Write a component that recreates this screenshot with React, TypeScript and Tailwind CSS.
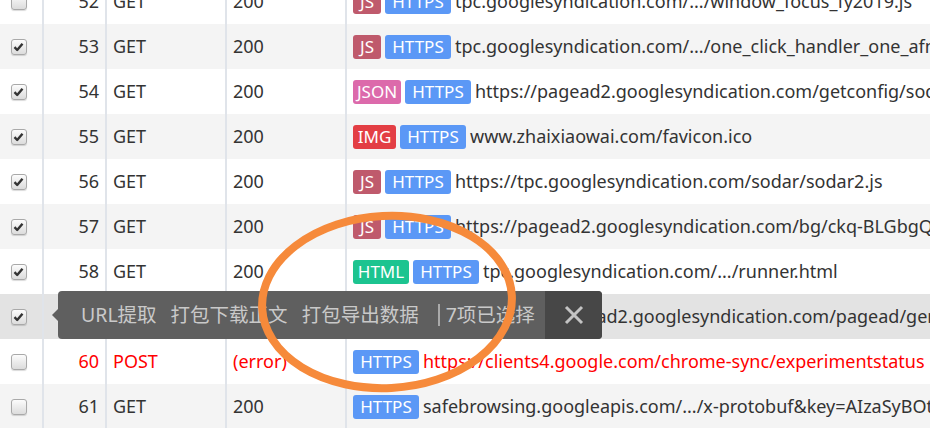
import React from 'react'

type Tag = 'JS' | 'JSON' | 'IMG' | 'HTML' | 'OTHER'

type Row = {
  id: number
  method: string
  status: string
  tag?: Tag
  url: string
  checked: boolean
  error?: boolean
}

const rows: Row[] = [
  { id: 52, method: 'GET', status: '200', tag: 'JS', url: 'tpc.googlesyndication.com/.../window_focus_fy2019.js', checked: false },
  { id: 53, method: 'GET', status: '200', tag: 'JS', url: 'tpc.googlesyndication.com/.../one_click_handler_one_afma_fy2019.js', checked: true },
  { id: 54, method: 'GET', status: '200', tag: 'JSON', url: 'https://pagead2.googlesyndication.com/getconfig/sodar', checked: true },
  { id: 55, method: 'GET', status: '200', tag: 'IMG', url: 'www.zhaixiaowai.com/favicon.ico', checked: true },
  { id: 56, method: 'GET', status: '200', tag: 'JS', url: 'https://tpc.googlesyndication.com/sodar/sodar2.js', checked: true },
  { id: 57, method: 'GET', status: '200', tag: 'JS', url: 'https://pagead2.googlesyndication.com/bg/ckq-BLGbgQ.js', checked: true },
  { id: 58, method: 'GET', status: '200', tag: 'HTML', url: 'tpc.googlesyndication.com/.../runner.html', checked: true },
  { id: 59, method: 'GET', status: '200', tag: 'OTHER', url: 'https://pagead2.googlesyndication.com/pagead/gen_204', checked: true },
  { id: 60, method: 'POST', status: '(error)', url: 'https://clients4.google.com/chrome-sync/experimentstatus', checked: false, error: true },
  { id: 61, method: 'GET', status: '200', url: 'safebrowsing.googleapis.com/.../x-protobuf&key=AIzaSyBOti4mM', checked: false },
]

// badge colour + fixed width, measured off the screenshot
const tagClass: Record<Tag, string> = {
  JS: 'w-[28px] bg-[#bf5a6c]',
  JSON: 'w-[48px] bg-[#dc6aab]',
  IMG: 'w-[43px] bg-[#e33e44]',
  HTML: 'w-[56px] bg-[#1cc490]',
  OTHER: 'w-[65px] bg-[#9a9a9a]',
}

function Badge({ label, className }: { label: string; className: string }) {
  return (
    <span className={`inline-flex h-[24px] shrink-0 items-center justify-center rounded-[3px] text-[17px] leading-none text-white ${className}`}>
      {label}
    </span>
  )
}

function Checkbox({ checked }: { checked: boolean }) {
  return (
    <span className="flex h-[16px] w-[16px] items-center justify-center rounded-[3px] border border-[#a9a9a9] bg-gradient-to-b from-[#fcfcfc] to-[#dcdcdc] shadow-[0_1px_1px_rgba(0,0,0,0.15)]">
      {checked && (
        <svg width="11" height="10" viewBox="0 0 11 10">
          <path d="M1.5 5.2 L4.2 8 L9.5 1.8" fill="none" stroke="#333" strokeWidth="2.4" strokeLinejoin="round" />
        </svg>
      )}
    </span>
  )
}

function TableRow({ row, index }: { row: Row; index: number }) {
  const bg = row.id === 59 ? 'bg-[#e3e3e3]' : index % 2 === 1 ? 'bg-[#f4f4f4]' : 'bg-white'
  const tone = row.error ? 'text-[#ff0000]' : 'text-[#333]'
  return (
    <div className={`flex h-[45px] items-center whitespace-nowrap ${bg}`}>
      <div className="flex h-full w-[44px] shrink-0 items-center justify-center border-r-2 border-[#e0e4ea] pr-[5px]">
        <Checkbox checked={row.checked} />
      </div>
      <div className={`flex h-full w-[63px] shrink-0 items-center justify-end border-r-2 border-[#e0e4ea] pr-[6px] ${tone}`}>
        {row.id}
      </div>
      <div className={`flex h-full w-[120px] shrink-0 items-center border-r-2 border-[#e0e4ea] pl-[6px] ${tone}`}>
        {row.method}
      </div>
      <div className={`flex h-full w-[120px] shrink-0 items-center border-r-2 border-[#e0e4ea] pl-[6px] ${tone}`}>
        {row.status}
      </div>
      <div className={`flex h-full min-w-0 flex-1 items-center gap-[4px] overflow-hidden pl-[6px] ${tone}`}>
        {row.tag && <Badge label={row.tag} className={tagClass[row.tag]} />}
        <Badge label="HTTPS" className="w-[66px] bg-[#5b98f6]" />
        <span>{row.url}</span>
      </div>
    </div>
  )
}

function SelectionBar() {
  return (
    <div className="absolute left-[58px] top-[291px] flex h-[48px] w-[544px] items-stretch rounded-[4px] bg-[#5f5f5f] text-[19.5px] text-[#c9c9c9]">
      <span className="absolute left-[-6px] top-[18px] h-0 w-0 border-y-[6px] border-r-[6px] border-y-transparent border-r-[#5f5f5f]" />
      <div className="flex flex-1 items-center gap-[14px] pl-[23px]">
        <span>URL提取</span>
        <span>打包下载正文</span>
        <span>打包导出数据</span>
        <span className="flex items-center gap-[6px] pl-[5px]">
          <span className="h-[22px] w-[2px] bg-[#aaa]" />
          7项已选择
        </span>
      </div>
      <div className="flex w-[57px] items-center justify-center rounded-r-[4px] bg-[#474747]">
        <svg width="20" height="20" viewBox="0 0 20 20">
          <path d="M2 2 L18 18 M18 2 L2 18" stroke="#c4c4c4" strokeWidth="3" />
        </svg>
      </div>
    </div>
  )
}

export default function App() {
  return (
    <div
      className="relative h-[428px] w-full overflow-hidden bg-white text-[18px]"
      style={{ fontFamily: '"Noto Sans", "Noto Sans CJK SC", sans-serif' }}
    >
      <div className="mt-[-21px]">
        {rows.map((r, i) => (
          <TableRow key={r.id} row={r} index={i} />
        ))}
      </div>
      <SelectionBar />
      <svg className="pointer-events-none absolute left-0 top-0" width="930" height="428">
        <ellipse cx="387" cy="302" rx="125" ry="86" fill="none" stroke="#f68a3b" strokeWidth="8" transform="rotate(-3 387 302)" />
      </svg>
    </div>
  )
}
